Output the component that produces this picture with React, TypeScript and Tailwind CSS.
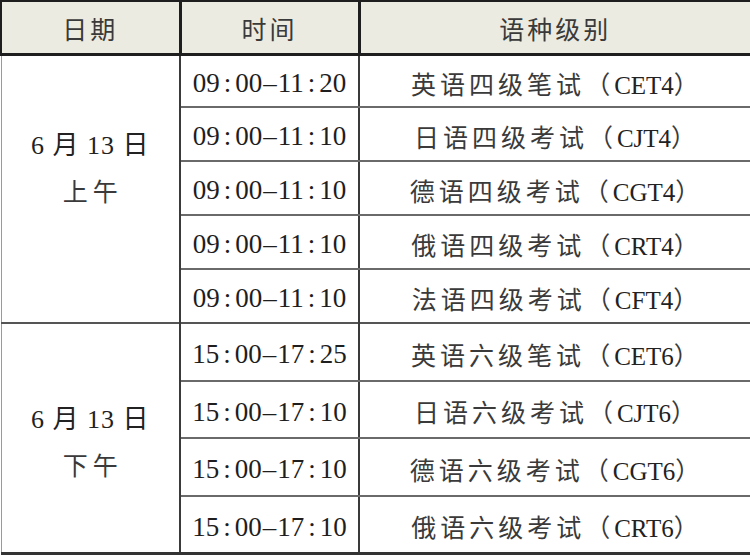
import React from 'react';

type Row = { time: string; zh: string; code: string; h: string };

const MORNING: Row[] = [
  { time: '09:00-11:20', zh: '英语四级笔试', code: 'CET4', h: 'h-[53px]' },
  { time: '09:00-11:10', zh: '日语四级考试', code: 'CJT4', h: 'h-[54px]' },
  { time: '09:00-11:10', zh: '德语四级考试', code: 'CGT4', h: 'h-[54px]' },
  { time: '09:00-11:10', zh: '俄语四级考试', code: 'CRT4', h: 'h-[54px]' },
  { time: '09:00-11:10', zh: '法语四级考试', code: 'CFT4', h: 'h-[54px]' },
];

const AFTERNOON: Row[] = [
  { time: '15:00-17:25', zh: '英语六级笔试', code: 'CET6', h: 'h-[58px]' },
  { time: '15:00-17:10', zh: '日语六级考试', code: 'CJT6', h: 'h-[57px]' },
  { time: '15:00-17:10', zh: '德语六级考试', code: 'CGT6', h: 'h-[58px]' },
  { time: '15:00-17:10', zh: '俄语六级考试', code: 'CRT6', h: 'h-[57px]' },
];

const font = { fontFamily: '"Liberation Serif", "Noto Sans CJK SC", serif' };

// 09:00-11:20 -> digits with wide colons and a long dash, like the Song-style original
const Time: React.FC<{ t: string }> = ({ t }) => {
  const [a, b] = t.split('-');
  const part = (s: string) => {
    const [h, m] = s.split(':');
    return (
      <>
        {h}
        <span className="mx-[4px]">:</span>
        {m}
      </>
    );
  };
  return (
    <span>
      {part(a)}
      <span className="mx-[1px]">–</span>
      {part(b)}
    </span>
  );
};

const DateCell: React.FC<{ rows: number; half: string; pad: string }> = ({ rows, half, pad }) => (
  <td
    rowSpan={rows}
    className={`align-top text-center text-[#222] border-l border-l-[#9a9a9a] border-r-2 border-r-[#3a3a3a] ${pad}`}
  >
    <div className="leading-[47px] text-[26px] tracking-[1px]">6 月 13 日</div>
    <div className="leading-[47px] text-[25px] tracking-[5px] pl-[5px] text-[#3a3a3a]">{half}</div>
  </td>
);

const Lines: React.FC<{ r: Row; last?: boolean }> = ({ r, last }) => (
  <>
    <td className={`text-center text-[27px] text-[#1e1e1e] pt-[5px] border-r-2 border-r-[#3a3a3a] ${last ? '' : 'border-b-2 border-b-[#6a6a6a]'}`}>
      <Time t={r.time} />
    </td>
    <td className={`text-center text-[#3a3a3a] pt-[9px] border-r-2 border-r-[#444] ${last ? '' : 'border-b-2 border-b-[#6a6a6a]'}`}>
      <span className="text-[25px] tracking-[4px]">{r.zh}（</span>
      <span className="text-[25px] text-[#222]">{r.code}</span>
      <span className="text-[25px]">）</span>
    </td>
  </>
);

export default function App() {
  return (
    <div className="w-[750px] h-[555px] bg-white overflow-hidden" style={font}>
      <table className="w-[750px] table-fixed border-collapse">
        <colgroup>
          <col className="w-[179px]" />
          <col className="w-[179px]" />
          <col className="w-[392px]" />
        </colgroup>
        <thead>
          <tr className="h-[53px] bg-[#ecebe1] text-[#3a3a3a] text-[25px]">
            <th className="font-normal tracking-[3px] pt-[7px] border-t-2 border-t-[#1e1e1e] border-l-2 border-l-[#1e1e1e] border-b-[3px] border-b-[#1e1e1e] border-r-[3px] border-r-[#1e1e1e]">日期</th>
            <th className="font-normal tracking-[3px] pt-[7px] border-t-2 border-t-[#1e1e1e] border-b-[3px] border-b-[#1e1e1e] border-r-[3px] border-r-[#1e1e1e]">时间</th>
            <th className="font-normal tracking-[3px] pt-[7px] border-t-2 border-t-[#1e1e1e] border-b-[3px] border-b-[#1e1e1e] border-r-2 border-r-[#1e1e1e]">语种级别</th>
          </tr>
        </thead>
        <tbody>
          {MORNING.map((r, i) => (
            <tr key={'m' + i} className={`${r.h} ${i === MORNING.length - 1 ? 'border-b-2 border-b-[#555]' : ''}`}>
              {i === 0 && <DateCell rows={5} half="上午" pad="pt-[66px]" />}
              <Lines r={r} last={i === MORNING.length - 1} />
            </tr>
          ))}
          {AFTERNOON.map((r, i) => (
            <tr key={'a' + i} className={`${r.h} ${i === AFTERNOON.length - 1 ? 'border-b-[3px] border-b-[#333]' : ''}`}>
              {i === 0 && <DateCell rows={4} half="下午" pad="pt-[72px]" />}
              <Lines r={r} last={i === AFTERNOON.length - 1} />
            </tr>
          ))}
        </tbody>
      </table>
    </div>
  );
}
